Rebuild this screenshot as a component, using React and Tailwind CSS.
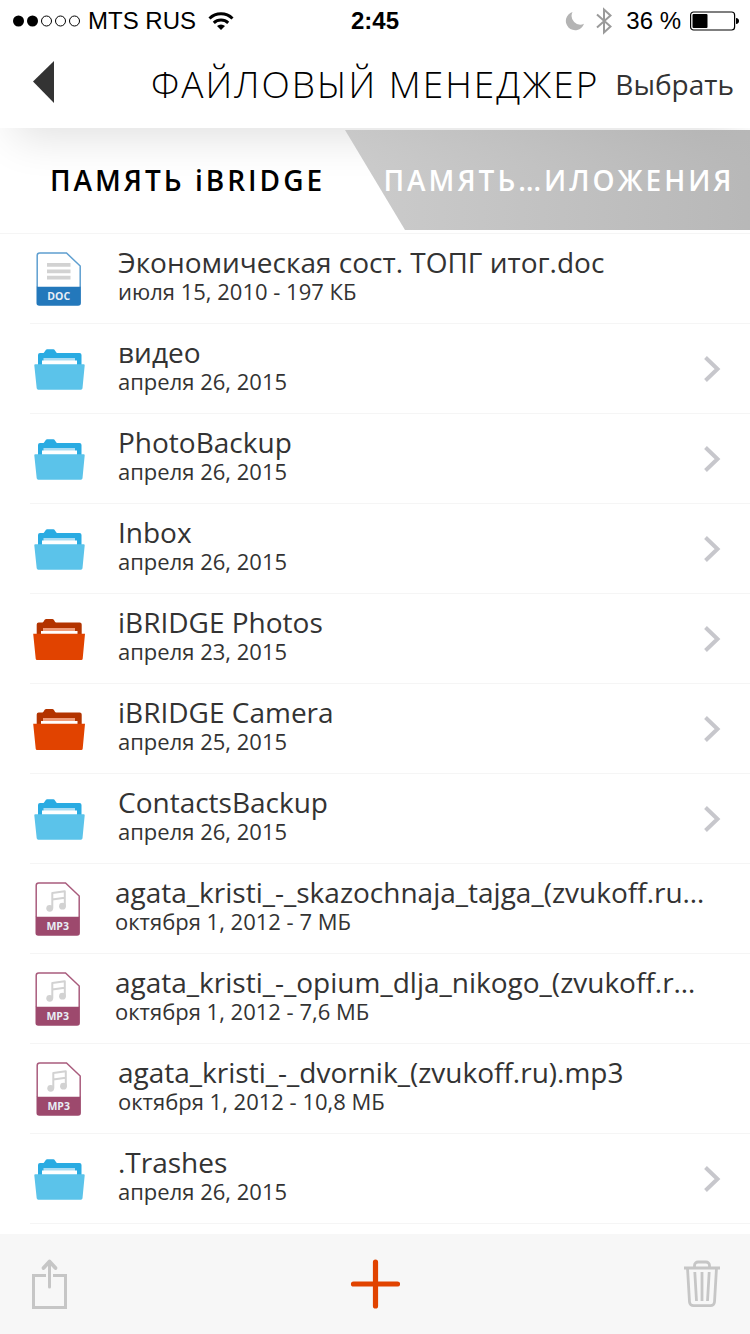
import React from "react";

const FILES = [
  { kind: "doc", name: "Экономическая сост. ТОПГ итог.doc", info: "июля 15, 2010 - 197 КБ" },
  { kind: "folder", name: "видео", info: "апреля 26, 2015" },
  { kind: "folder", name: "PhotoBackup", info: "апреля 26, 2015" },
  { kind: "folder", name: "Inbox", info: "апреля 26, 2015" },
  { kind: "appFolder", name: "iBRIDGE Photos", info: "апреля 23, 2015" },
  { kind: "appFolder", name: "iBRIDGE Camera", info: "апреля 25, 2015" },
  { kind: "folder", name: "ContactsBackup", info: "апреля 26, 2015" },
  { kind: "mp3", long: true, name: "agata_kristi_-_skazochnaja_tajga_(zvukoff.ru…", info: "октября 1, 2012 - 7 МБ" },
  { kind: "mp3", long: true, name: "agata_kristi_-_opium_dlja_nikogo_(zvukoff.r…", info: "октября 1, 2012 - 7,6 МБ" },
  { kind: "mp3", name: "agata_kristi_-_dvornik_(zvukoff.ru).mp3", info: "октября 1, 2012 - 10,8 МБ" },
  { kind: "folder", name: ".Trashes", info: "апреля 26, 2015" },
];

function FolderIcon() {
  return (
    <svg width="54" height="54" viewBox="0 2 54 54" aria-hidden="true">
      <path d="M6 28V15a2 2 0 0 1 2-2h3.500c1 0 2-3.700 3.500-3.700h6.500c1.500 0 2.500 3.700 3.500 3.700H47.500a2 2 0 0 1 2 2V28z" fill="#29abe2" />
      <path d="M11.500 18H43v6H11.500z" fill="#a9dcf3" />
      <path d="M10 20.500H45V26H10z" fill="#fff" />
      <path d="M3.300 24.200h48.400a1 1 0 0 1 1 1.100L50.500 48.300a1.600 1.600 0 0 1-1.600 1.400H6.300a1.600 1.600 0 0 1-1.600-1.400L2.300 25.300a1 1 0 0 1 1-1.100z" fill="#5bc3ea" />
    </svg>
  );
}

function AppFolderIcon() {
  return (
    <svg width="54" height="54" viewBox="0 2 54 54" aria-hidden="true">
      <path d="M4.700 28V14.500a2 2 0 0 1 2-2H10.500c1 0 2-3.500 3.500-3.500h6.500c1.500 0 2.500 3.500 3.500 3.500H47.700a2 2 0 0 1 2 2V28z" fill="#b33400" />
      <path d="M11 18H43v3.500H11z" fill="#ef9c7a" />
      <path d="M9 21H45.500V26H9z" fill="#fff" />
      <path d="M1.200 23.800h51.800L50.700 48.800a1.400 1.400 0 0 1-1.400 1.200H5.100a1.400 1.400 0 0 1-1.400-1.200z" fill="#e14300" />
    </svg>
  );
}

function FileIcon({ color, border, label, children }) {
  return (
    <svg width="54" height="56" viewBox="0 0 54 56" aria-hidden="true">
      <path d="M5.200 36V4.500A2.500 2.500 0 0 1 7.700 2H34.500L48.200 15v21" fill="#fff" stroke={border} strokeWidth="1.500" />
      <path d="M4.500 35.700h44.400V52a2.800 2.800 0 0 1-2.800 2.800H7.300A2.800 2.800 0 0 1 4.500 52z" fill={color} />
      {children}
      <text x="26.700" y="48.700" textAnchor="middle" fill="#e8eef5" fontFamily="Open Sans, sans-serif" fontSize="10.500" fontWeight="700">
        {label}
      </text>
    </svg>
  );
}

function EntryIcon({ kind }) {
  if (kind === "folder") return <FolderIcon />;
  if (kind === "appFolder") return <AppFolderIcon />;
  if (kind === "doc")
    return (
      <FileIcon color="#2378bb" border="#5f9fd0" label="DOC">
        <path d="M15 13.900h23.500M15 20.300h23.500M15 26.600h23.500" stroke="#d2d2d2" strokeWidth="3.800" />
      </FileIcon>
    );
  return (
    <FileIcon color="#9d496d" border="#a95c7d" label="MP3">
      <path d="M21.300 27.300V12l12.500-1.700V25M21.300 18.500l12.500-1.700" fill="none" stroke="#d2d2d2" strokeWidth="2" strokeLinejoin="round" />
      <circle cx="18.700" cy="27.300" r="3.400" fill="#d2d2d2" />
      <circle cx="31.500" cy="25.200" r="3.400" fill="#d2d2d2" />
    </FileIcon>
  );
}

function StatusBar() {
  return (
    <div className="grid h-10 grid-cols-[1fr_auto_1fr] items-center px-[10px] pt-[2px] font-['Liberation_Sans',sans-serif] text-[24px] leading-7 text-black">
      <div className="flex items-center">
        <svg width="71" height="12" viewBox="-3 0 71 12" aria-hidden="true">
          <circle cx="5.500" cy="6" r="5.500" />
          <circle cx="19.500" cy="6" r="5.500" />
          <g fill="none" stroke="#000">
            <circle cx="33.500" cy="6" r="5" />
            <circle cx="47.500" cy="6" r="5" />
            <circle cx="61.500" cy="6" r="5" />
          </g>
        </svg>
        <span className="ml-[7px]">MTS RUS</span>
        <svg className="ml-3" width="26" height="20" viewBox="0 0 26 20" aria-hidden="true">
          <g fill="none" stroke="#000" strokeWidth="3">
            <path d="M1.500 7.500a16.500 16.500 0 0 1 23 0" />
            <path d="M5.800 11.800a10.500 10.500 0 0 1 14.400 0" />
          </g>
          <path d="M9 15a6 6 0 0 1 8 0l-4 4z" />
        </svg>
      </div>
      <span className="font-bold">2:45</span>
      <div className="flex items-center justify-end">
        <svg width="20" height="20" viewBox="0 0 20 20" aria-hidden="true">
          <path d="M7.500 1A9.300 9.300 0 1 0 19 12.800 8.800 8.800 0 0 1 7.500 1z" fill="#b4b4b4" />
        </svg>
        <svg className="ml-[10px]" width="18" height="28" viewBox="0 0 18 28" aria-hidden="true">
          <path d="M2 7.500l13.500 12L9 25.500V2.500l6.500 6L2 20.500" fill="none" stroke="#9a9a9a" strokeWidth="2" />
        </svg>
        <span className="ml-[13px]">36 %</span>
        <svg className="ml-[9px]" width="50" height="20" viewBox="0 0 50 20" aria-hidden="true">
          <rect x=".6" y="1" width="44" height="18" rx="3" fill="none" stroke="#000" strokeWidth="1.200" />
          <rect x="2.500" y="3" width="15" height="14" rx="1" />
          <path d="M46 7c2 .3 3 1.300 3 3s-1 2.700-3 3z" />
        </svg>
      </div>
    </div>
  );
}

function Row({ entry }) {
  const isFolder = entry.kind === "folder" || entry.kind === "appFolder";
  return (
    <li className="pl-[30px]">
      <button
        type="button"
        className={`flex h-[90px] w-full items-center border-b border-[#f5f5f5] pr-[29px] text-left ${entry.long ? "gap-[30px] pl-px" : "gap-8 pl-[2px]"}`}
      >
        <EntryIcon kind={entry.kind} />
        <span className="flex min-w-0 flex-1 flex-col pb-2">
          <span className="text-[28px] leading-8 whitespace-nowrap text-[#333]">{entry.name}</span>
          <span className="text-[22px] leading-[26px] text-[#333]">{entry.info}</span>
        </span>
        {isFolder && (
          <svg width="18" height="28" viewBox="0 0 18 28" aria-hidden="true">
            <path d="M2.500 2.500L14.500 14 2.500 25.500" fill="none" stroke="#c7c7cc" strokeWidth="4" />
          </svg>
        )}
      </button>
    </li>
  );
}

export default function App() {
  return (
    <div className="flex min-h-screen flex-col bg-white font-['Open_Sans',sans-serif]">
      <header className="relative bg-white shadow-[0_24px_44px_-14px_rgba(0,0,0,0.12)]">
        <StatusBar />
        <div className="flex h-[88px] items-center pr-4 pl-[33px]">
          <button type="button" aria-label="Назад">
            <svg width="21" height="46" viewBox="0 0 21 46" aria-hidden="true">
              <path d="M21 0v42L0 20.500z" fill="#333" />
            </svg>
          </button>
          <h1 className="mr-4 ml-auto text-[37px] font-light tracking-[2px] whitespace-nowrap text-black">ФАЙЛОВЫЙ МЕНЕДЖЕР</h1>
          <button type="button" className="text-[28px] text-[#333]">Выбрать</button>
        </div>
      </header>

      <div role="tablist" className="relative flex h-[106px] items-start border-b border-[#f5f5f5] pt-[2px] text-[28px] font-semibold tracking-[3px] whitespace-nowrap">
        <button type="button" role="tab" aria-selected="true" className="h-[100px] w-[46%] pl-[30px] text-black">
          ПАМЯТЬ iBRIDGE
        </button>
        <button
          type="button"
          role="tab"
          aria-selected="false"
          className="h-[100px] flex-1 bg-linear-to-r from-[#bfbfbf]/80 to-[#a6a6a6]/80 pl-[23px] text-white [clip-path:polygon(0_0,100%_0,100%_100%,60px_100%)]"
        >
          ПАМЯТЬ…ИЛОЖЕНИЯ
        </button>
      </div>

      <ul className="flex-1">
        {FILES.map((entry) => (
          <Row key={entry.name} entry={entry} />
        ))}
      </ul>

      <footer className="grid h-[100px] grid-cols-3 items-center bg-[#f7f7f7] px-[30px]">
        <button type="button" aria-label="Поделиться" className="justify-self-start">
          <svg width="38" height="52" viewBox="0 0 38 52" aria-hidden="true">
            <g fill="none" stroke="#c6c6c6" strokeWidth="3">
              <path d="M16 17.500H3.500v32h32v-32H23" />
              <path d="M19.500 29V4" strokeLinecap="round" />
              <path d="M13.500 10l6-6.500 6 6.500" strokeWidth="3.800" strokeLinecap="round" strokeLinejoin="round" />
            </g>
          </svg>
        </button>
        <button type="button" aria-label="Добавить" className="justify-self-center">
          <svg width="50" height="50" viewBox="0 0 50 50" aria-hidden="true">
            <path d="M25.500 3v44M3.500 25h44" stroke="#e14300" strokeWidth="5.200" strokeLinecap="round" />
          </svg>
        </button>
        <button type="button" aria-label="Удалить" className="justify-self-end">
          <svg width="36" height="48" viewBox="0 0 36 48" aria-hidden="true">
            <g fill="none" stroke="#c6c6c6" strokeWidth="2.800">
              <path d="M0 8h36" />
              <path d="M10.500 7V5.500A3.500 3.500 0 0 1 14 2h8a3.500 3.500 0 0 1 3.500 3.500V7" />
              <path d="M3.500 8l2 34a4 4 0 0 0 4 3.700h17a4 4 0 0 0 4-3.700l2-34" />
              <path d="M10.800 12l1.700 29M18 12v29M25.200 12l-1.700 29" />
            </g>
          </svg>
        </button>
      </footer>
    </div>
  );
}
